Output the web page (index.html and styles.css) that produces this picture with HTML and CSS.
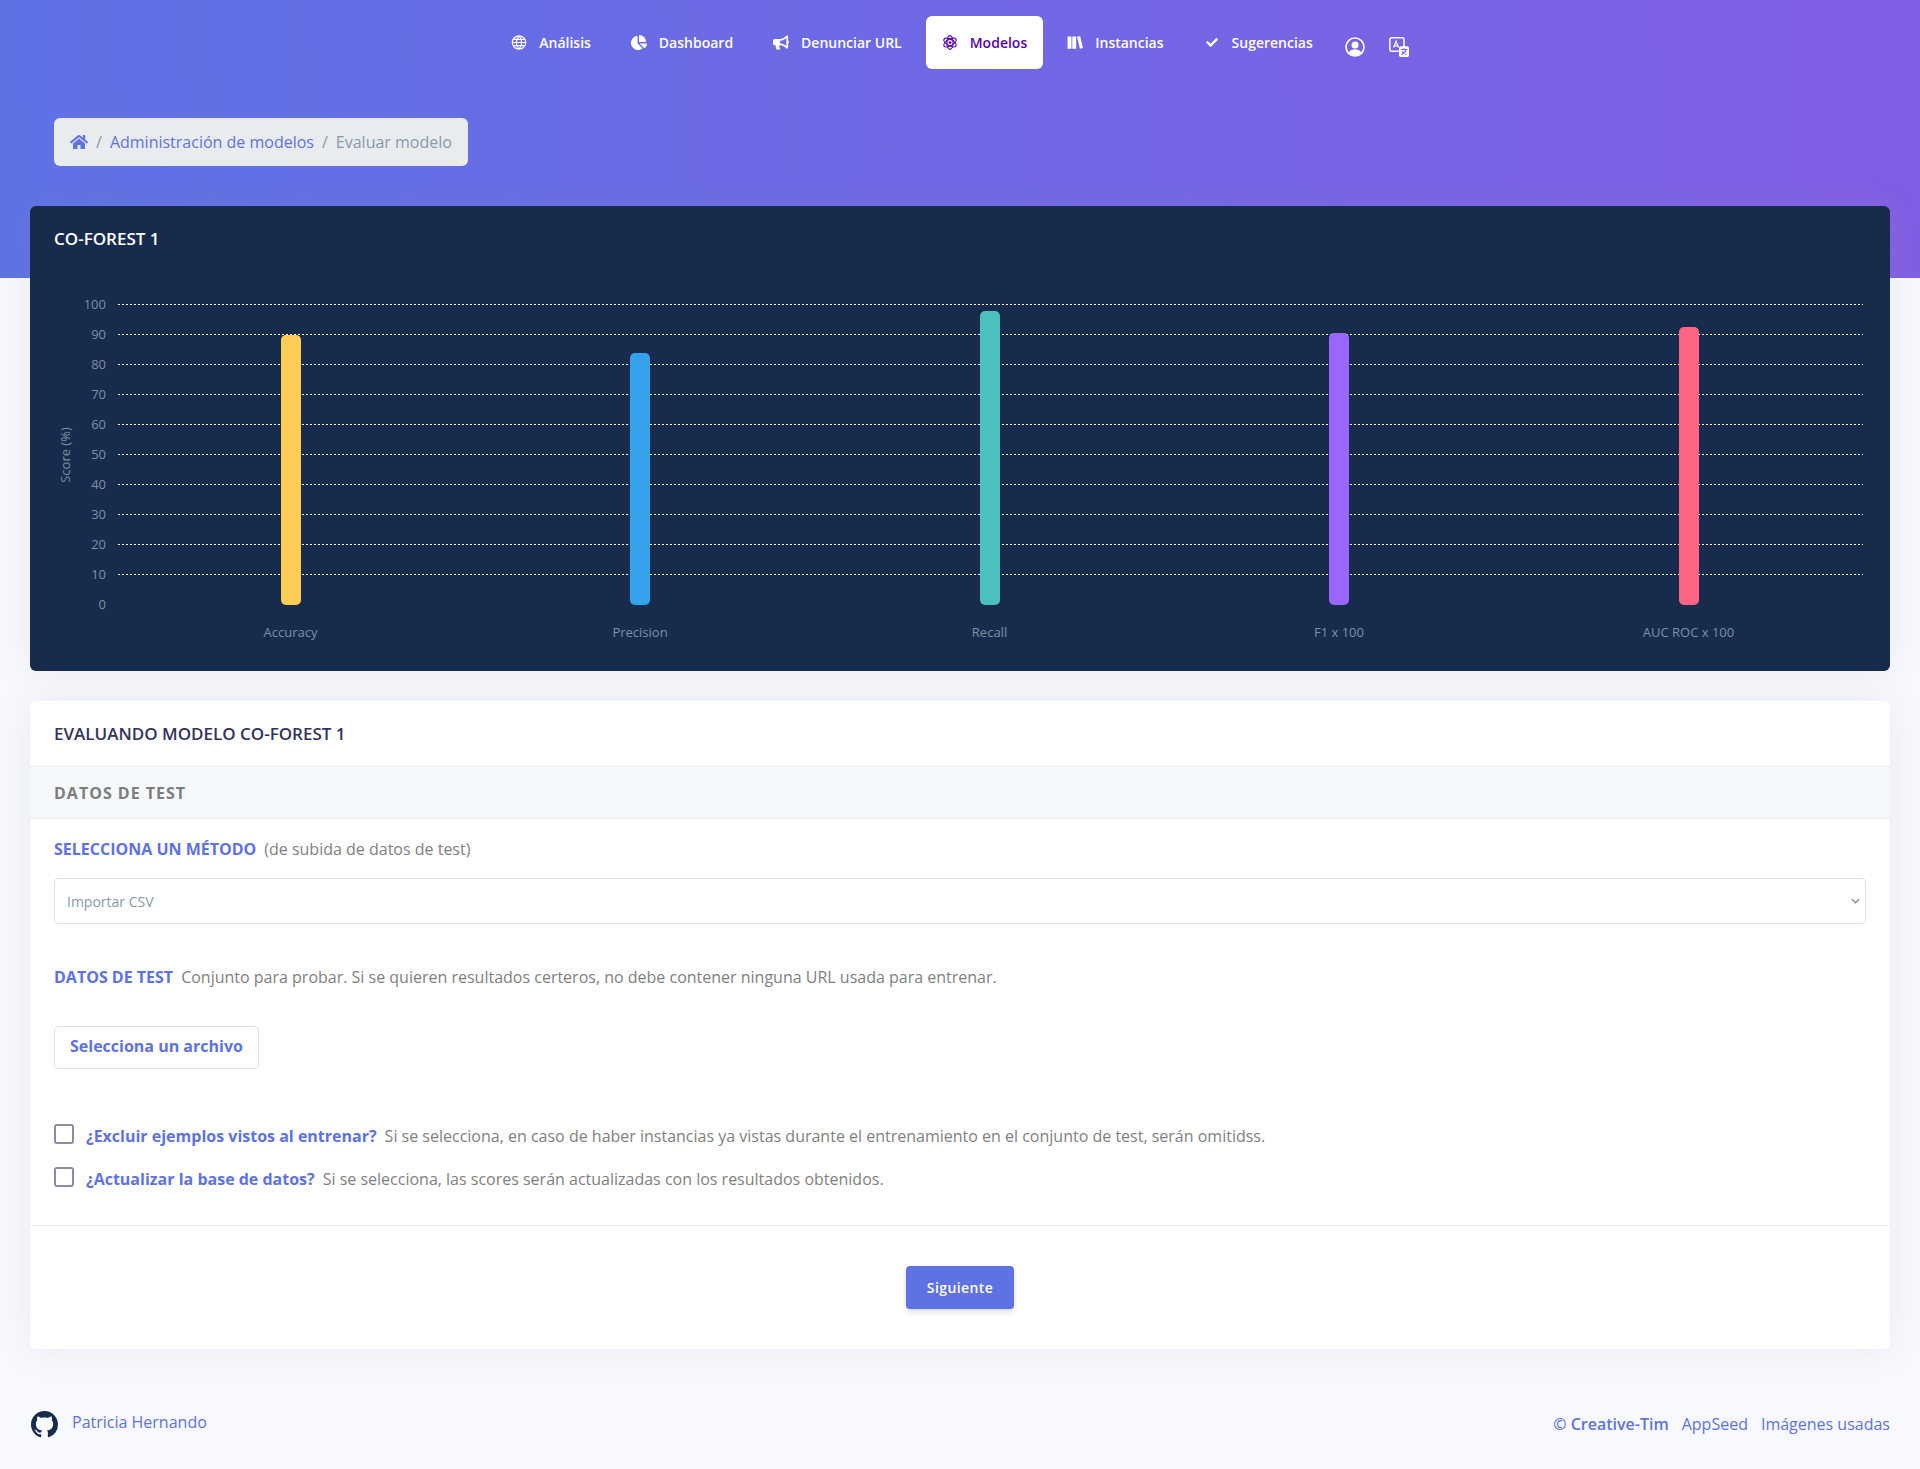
FILE: index.html
```html
<!DOCTYPE html>
<html lang="es">
<head>
<meta charset="utf-8">
<title>Evaluar modelo</title>
<link rel="stylesheet" href="styles.css">
</head>
<body>
<header class="hero">
  <nav class="nav">
    <a class="nav-link"><svg class="nav-icon" viewBox="0 0 512 512"><path fill="none" stroke="currentColor" stroke-width="40" d="M256 28a228 228 0 1 0 0 456a228 228 0 1 0 0-456zM256 28c-60 60-90 140-90 228s30 168 90 228c60-60 90-140 90-228s-30-168-90-228zM28 256h456M60 150h392M60 362h392"/></svg>Análisis</a>
    <a class="nav-link"><svg class="nav-icon" viewBox="0 0 544 512"><path fill="currentColor" d="M527.790 288H290.500l158.030 158.030c6.040 6.040 15.980 6.530 22.190.68 38.700-36.460 65.320-85.610 73.130-140.860 1.340-9.460-6.490-17.850-16.060-17.850zm-15.830-64.800C503.720 103.740 408.260 8.280 288.800.04 279.680-.59 272 7.100 272 16.240V240h223.770c9.140 0 16.820-7.680 16.190-16.800zM224 288V50.710c0-9.550-8.390-17.400-17.840-16.060C86.990 51.490-4.100 155.600.14 280.370 4.500 408.510 114.830 513.590 243.030 511.980c50.400-.63 96.970-16.870 135.260-44.030 7.900-5.600 8.420-17.230 1.570-24.080L224 288z"/></svg>Dashboard</a>
    <a class="nav-link"><svg class="nav-icon" viewBox="0 0 576 512"><path fill="currentColor" d="M576 240c0-23.630-12.950-44.040-32-55.120V32.010C544 23.260 537.020 0 512 0c-7.120 0-14.190 2.380-19.980 7.020l-85.030 68.030C364.280 109.190 310.660 128 256 128H64c-35.350 0-64 28.650-64 64v96c0 35.350 28.650 64 64 64h33.700c-1.390 10.480-2.180 21.140-2.180 32 0 39.770 9.260 77.350 25.560 110.940 5.190 10.690 16.520 17.060 28.400 17.060h74.280c26.050 0 41.690-29.840 25.900-50.560-16.400-21.520-26.150-48.360-26.150-77.440 0-11.110 1.620-21.790 4.410-32H256c54.660 0 108.280 18.810 150.980 52.950l85.030 68.030a32.020 32.020 0 0 0 19.980 7.020c24.920 0 32-22.780 32-32V295.130C563.050 284.040 576 263.630 576 240zm-96 141.420l-33.050-26.440C392.950 311.780 325.120 288 256 288v-96c69.120 0 136.950-23.780 190.950-66.980L480 98.580v282.840z"/></svg>Denunciar URL</a>
    <a class="nav-link is-active"><svg class="nav-icon" viewBox="0 0 24 24"><g fill="none" stroke="currentColor" stroke-width="2"><ellipse cx="12" cy="12" rx="5" ry="11"/><ellipse cx="12" cy="12" rx="5" ry="11" transform="rotate(60 12 12)"/><ellipse cx="12" cy="12" rx="5" ry="11" transform="rotate(120 12 12)"/></g><circle cx="12" cy="12" r="2.200" fill="currentColor"/></svg>Modelos</a>
    <a class="nav-link"><svg class="nav-icon" viewBox="0 0 576 512"><path fill="currentColor" d="M20 40h140v440H20zM190 40h140v440H190zM360 52l110-26 106 430-110 28z"/></svg>Instancias</a>
    <a class="nav-link"><svg class="nav-icon" viewBox="-70 -70 652 652"><path fill="currentColor" d="M174 439 7 272a26 26 0 0 1 0-36l36-36a26 26 0 0 1 36 0l113 113L433 72a26 26 0 0 1 36 0l36 36a26 26 0 0 1 0 36L210 439a26 26 0 0 1-36 0z"/></svg>Sugerencias</a>
    <a class="nav-round"><svg class="round-icon" viewBox="0 0 24 24"><circle cx="12" cy="12" r="10.800" fill="none" stroke="#fff" stroke-width="2"/><circle cx="12" cy="9.500" r="4.200" fill="#fff"/><path fill="#fff" d="M4.800 18.500C6 15.600 9 14.800 12 14.800s6 .8 7.200 3.700A10 10 0 0 1 12 22a10 10 0 0 1-7.200-3.500z"/></svg></a>
    <a class="nav-round"><svg class="round-icon" viewBox="0 0 24 24"><rect x="1" y="1" width="17" height="16" rx="2" fill="none" stroke="#fff" stroke-width="1.800"/><path fill="none" stroke="#fff" stroke-width="1.500" d="M5.500 12.500 8.500 5l3 7.500M6.500 10.500h4"/><rect x="12" y="11" width="12" height="13" rx="2" fill="#fff"/><path fill="none" stroke="#7a63e4" stroke-width="1.400" d="M14 15h8M18 13.500V15M20.500 15c-.6 2.500-2.500 4.500-5.500 6M15.500 17c1 1.800 3 3.200 5.500 4"/></svg></a>
  </nav>
  <div class="crumb-row">
    <ol class="crumb">
      <li class="crumb-item"><svg class="home" viewBox="0 0 576 512"><path fill="currentColor" d="M280 148 96 300v164a16 16 0 0 0 16 16l112-.3a16 16 0 0 0 16-16V368a16 16 0 0 1 16-16h64a16 16 0 0 1 16 16v95.600a16 16 0 0 0 16 16l112 .4a16 16 0 0 0 16-16V300L296 148a12 12 0 0 0-16 0zM572 251l-84-69V44a12 12 0 0 0-12-12h-56a12 12 0 0 0-12 12v72l-89-73a48 48 0 0 0-61 0L4 251a12 12 0 0 0-2 17l26 31a12 12 0 0 0 17 2L280 107a12 12 0 0 1 16 0l235 194a12 12 0 0 0 17-2l26-31a12 12 0 0 0-2-17z"/></svg></li>
      <li class="crumb-sep">/</li>
      <li class="crumb-item">Administración de modelos</li>
      <li class="crumb-sep">/</li>
      <li class="crumb-current">Evaluar modelo</li>
    </ol>
  </div>
</header>

<main class="main">
  <section class="card card-dark">
    <h3 class="card-title-light">CO-FOREST 1</h3>
    <svg class="chart" viewBox="0 0 1860 397" width="1860" height="397">
      <g class="grid">
        <path d="M88 38.500H1833"/><path d="M88 68.500H1833"/><path d="M88 98.500H1833"/><path d="M88 128.500H1833"/><path d="M88 158.500H1833"/><path d="M88 188.500H1833"/><path d="M88 218.500H1833"/><path d="M88 248.500H1833"/><path d="M88 278.500H1833"/><path d="M88 308.500H1833"/>
      </g>
      <g class="ticks">
        <text x="76" y="43">100</text><text x="76" y="73">90</text><text x="76" y="103">80</text><text x="76" y="133">70</text><text x="76" y="163">60</text><text x="76" y="193">50</text><text x="76" y="223">40</text><text x="76" y="253">30</text><text x="76" y="283">20</text><text x="76" y="313">10</text><text x="76" y="343">0</text>
      </g>
      <text class="axis-title" transform="translate(40 189) rotate(-90)">Score (%)</text>
      <g class="bars">
        <rect x="251" y="69" width="20" height="270" rx="5" fill="#ffcd56"/>
        <rect x="600" y="87" width="20" height="252" rx="5" fill="#36a2eb"/>
        <rect x="950" y="45" width="20" height="294" rx="5" fill="#4bc0c0"/>
        <rect x="1299" y="67" width="20" height="272" rx="5" fill="#9966ff"/>
        <rect x="1649" y="61" width="20" height="278" rx="5" fill="#ff6384"/>
      </g>
      <g class="labels">
        <text x="260.500" y="371">Accuracy</text><text x="610" y="371">Precision</text><text x="959.500" y="371">Recall</text><text x="1309" y="371">F1 x 100</text><text x="1658.500" y="371">AUC ROC x 100</text>
      </g>
    </svg>
  </section>

  <section class="card card-form">
    <h3 class="card-title">EVALUANDO MODELO CO-FOREST 1</h3>
    <div class="section-bar">DATOS DE TEST</div>
    <div class="form-body">
      <p class="line"><strong class="lead">SELECCIONA UN MÉTODO</strong><span class="muted">(de subida de datos de test)</span></p>
      <div class="select"><span>Importar CSV</span><svg class="chev" viewBox="0 0 10 6"><path fill="none" stroke="#7b8aa3" stroke-width="1.400" d="M1 1l4 4 4-4"/></svg></div>
      <p class="line line-data"><strong class="lead">DATOS DE TEST</strong><span class="muted">Conjunto para probar. Si se quieren resultados certeros, no debe contener ninguna URL usada para entrenar.</span></p>
      <div class="file-btn">Selecciona un archivo</div>
      <div class="checks">
        <div class="check"><span class="box"></span><strong class="q">¿Excluir ejemplos vistos al entrenar?</strong><span class="muted">Si se selecciona, en caso de haber instancias ya vistas durante el entrenamiento en el conjunto de test, serán omitidss.</span></div>
        <div class="check"><span class="box"></span><strong class="q">¿Actualizar la base de datos?</strong><span class="muted">Si se selecciona, las scores serán actualizadas con los resultados obtenidos.</span></div>
      </div>
    </div>
    <div class="form-foot"><a class="btn-primary">Siguiente</a></div>
  </section>
</main>

<footer class="footer">
  <div class="foot-left">
    <svg class="gh" viewBox="0 0 16 16"><path fill="#172b4d" d="M8 0C3.580 0 0 3.580 0 8c0 3.540 2.290 6.530 5.470 7.590.4.070.55-.17.55-.38 0-.19-.01-.82-.01-1.490-2.010.37-2.530-.49-2.690-.94-.09-.23-.48-.94-.82-1.130-.28-.15-.68-.52-.01-.53.630-.01 1.080.58 1.230.82.720 1.210 1.870.87 2.330.66.070-.52.280-.87.510-1.070-1.780-.2-3.640-.89-3.640-3.950 0-.87.310-1.590.820-2.150-.08-.2-.36-1.020.08-2.120 0 0 .67-.21 2.200.82.640-.18 1.320-.27 2-.27s1.360.09 2 .27c1.530-1.040 2.200-.82 2.200-.82.440 1.100.160 1.920.08 2.120.51.560.82 1.270.82 2.150 0 3.070-1.870 3.750-3.650 3.950.29.250.54.730.54 1.480 0 1.070-.01 1.930-.01 2.200 0 .21.15.46.55.38A8.010 8.010 0 0 0 16 8c0-4.420-3.580-8-8-8z"/></svg>
    <span class="foot-name">Patricia Hernando</span>
  </div>
  <div class="foot-right"><strong class="foot-strong">© Creative-Tim</strong><span>AppSeed</span><span>Imágenes usadas</span></div>
</footer>
</body>
</html>
```

FILE: styles.css
```css
* { box-sizing: border-box; }
html, body { margin: 0; padding: 0; }
body {
  width: 1920px;
  height: 1469px;
  overflow: hidden;
  background: #f8f9fe;
  font-family: "Open Sans", sans-serif;
  color: #525f7f;
}
.hero {
  height: 278px;
  padding-top: 16px;
  background: linear-gradient(87deg, #5e72e4 0, #825ee4 100%);
}
.nav {
  display: flex;
  justify-content: center;
  align-items: flex-start;
  gap: 8px;
  height: 53px;
  padding-right: 8px;
}
.nav-link {
  display: flex;
  align-items: center;
  height: 53px;
  padding: 0 16px;
  color: #fff;
  font-size: 14px;
  font-weight: 600;
  border-radius: 6px;
}
.nav-link.is-active { background: #fff; color: #5603ad; }
.nav-icon { width: 16px; height: 15px; margin-right: 12px; flex: none; }
.nav-round { display: flex; padding: 0 8px; margin-top: 21px; }
.round-icon { width: 20px; height: 20px; }
.crumb-row { padding: 49px 0 0 54px; }
.crumb {
  display: inline-flex;
  align-items: center;
  gap: 8px;
  margin: 0;
  padding: 0 16px;
  height: 48px;
  list-style: none;
  background: #e9ecef;
  border-radius: 6px;
  font-size: 16px;
}
.crumb-item { color: #5e72e4; display: flex; }
.crumb-sep { color: #8898aa; }
.crumb-current { color: #8898aa; }
.home { width: 18px; height: 16px; }
.main { padding: 0 30px; margin-top: -72px; }
.card {
  border-radius: 6px;
  box-shadow: 0 0 32px rgba(136,152,170,.15);
}
.card-dark { height: 465px; background: #172b4d; }
.card-title-light {
  margin: 0;
  padding: 23px 24px 0;
  height: 66px;
  color: #fff;
  font-size: 17px;
  line-height: 20px;
  font-weight: 600;
}
.chart { display: block; margin-top: -6px; }
.grid path { stroke: #fff; stroke-width: 1; stroke-dasharray: 2 2; fill: none; }
.ticks text { fill: #7f8fa6; font-size: 13px; text-anchor: end; font-family: "Open Sans", sans-serif; }
.labels text { fill: #7f8fa6; font-size: 13px; text-anchor: middle; font-family: "Open Sans", sans-serif; }
.axis-title { fill: #7f8fa6; font-size: 13px; text-anchor: middle; font-family: "Open Sans", sans-serif; }
.card-form { margin-top: 30px; height: 648px; background: #fff; }
.card-title {
  margin: 0;
  height: 66px;
  padding: 23px 24px 0;
  color: #32325d;
  font-size: 17px;
  line-height: 20px;
  font-weight: 600;
  border-bottom: 1px solid #e9ecef;
}
.section-bar {
  height: 52px;
  padding: 0 24px;
  line-height: 52px;
  background: #f6f9fc;
  border-bottom: 1px solid #e9ecef;
  color: #7d7d7d;
  font-size: 16px;
  font-weight: 700;
  letter-spacing: 1px;
}
.form-body { padding: 0 24px; height: 407px; border-bottom: 1px solid #e9ecef; }
.line { margin: 0; padding-top: 18px; font-size: 16px; line-height: 24px; }
.lead { color: #5e72e4; font-weight: 700; margin-right: 8px; }
.muted { color: #7f7f7f; font-weight: 400; }
.select {
  display: flex;
  align-items: center;
  justify-content: space-between;
  height: 46px;
  margin-top: 17px;
  padding: 0 5px 0 12px;
  border: 1px solid #dee2e6;
  border-radius: 4px;
  color: #8898aa;
  font-size: 14px;
}
.chev { width: 9px; height: 6px; }
.line-data { padding-top: 41px; }
.file-btn {
  display: inline-flex;
  align-items: center;
  height: 43px;
  margin-top: 37px;
  padding: 0 15px 3px;
  border: 1px solid #dee2e6;
  border-radius: 4px;
  color: #5e72e4;
  font-size: 16px;
  font-weight: 700;
}
.checks { display: flex; flex-direction: column; gap: 19px; margin-top: 55px; }
.check { display: flex; align-items: center; height: 24px; font-size: 16px; }
.box { width: 20px; height: 20px; margin-right: 12px; border: 2px solid #8b8ba1; border-radius: 3px; flex: none; margin-top: -4px; }
.q { color: #5e72e4; font-weight: 700; margin-right: 8px; }
.form-foot { display: flex; justify-content: center; padding-top: 40px; }
.btn-primary {
  display: flex;
  align-items: center;
  justify-content: center;
  width: 108px;
  height: 43px;
  background: #5e72e4;
  color: #fff;
  border-radius: 4px;
  font-size: 14px;
  font-weight: 600;
  letter-spacing: .4px;
  box-shadow: 0 4px 6px rgba(50,50,93,.11), 0 1px 3px rgba(0,0,0,.08);
}
.footer {
  display: flex;
  justify-content: space-between;
  align-items: flex-start;
  margin-top: 61px;
  padding: 0 30px;
}
.foot-left { display: flex; align-items: flex-start; }
.gh { width: 27px; height: 27px; margin: 1px 14px 0 1px; }
.foot-name { color: #5e72e4; font-size: 16px; line-height: 22px; margin-top: 1px; }
.foot-right { display: flex; gap: 13px; color: #5e72e4; font-size: 16px; padding-top: 3px; }
.foot-strong { font-weight: 600; }
```
